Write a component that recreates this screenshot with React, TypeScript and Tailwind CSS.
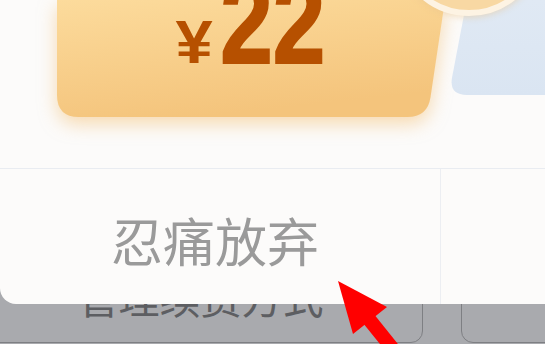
import React from "react";

const cjk = { fontFamily: '"Noto Sans CJK SC", "Noto Sans", sans-serif' };
const latin = { fontFamily: '"Liberation Sans", Arial, sans-serif' };

function GoldCoupon() {
  return (
    <div className="relative w-[389px] h-[117px] shrink-0">
      <svg
        width="389"
        height="117"
        viewBox="0 0 389 117"
        className="absolute inset-0 drop-shadow-[0_7px_9px_rgba(242,186,104,0.5)]"
      >
        <defs>
          <linearGradient id="gold" x1="0" y1="0" x2="0.35" y2="1">
            <stop offset="0" stopColor="#fcdb9c" />
            <stop offset="1" stopColor="#f4c47c" />
          </linearGradient>
        </defs>
        <path
          d="M0 0 H388 L373.5 97.2 Q370.5 117 350.5 117 H22 Q0 117 0 95 Z"
          fill="url(#gold)"
        />
      </svg>
      <div
        className="relative flex items-baseline justify-center -mt-[37px] pl-[12px] leading-none text-[#b65000] font-bold"
        style={latin}
      >
        <span className="text-[62px] inline-block scale-x-[1.08]">¥</span>
        <span className="text-[118px] inline-block -ml-[5px] scale-x-[0.8] [-webkit-text-stroke:2px_#b65000]">22</span>
      </div>
    </div>
  );
}

function BlueCoupon() {
  return (
    <div className="relative w-[105px] h-[95px] shrink-0 -ml-[6px]">
      <svg width="105" height="95" viewBox="0 0 105 95" className="absolute inset-0">
        <defs>
          <linearGradient id="blue" x1="0" y1="0" x2="0" y2="1">
            <stop offset="0" stopColor="#e0e9f4" />
            <stop offset="1" stopColor="#dae5f2" />
          </linearGradient>
        </defs>
        <path d="M26.8 0 H105 V95 H26.8 Q8.8 95 12.1 77.3 Z" fill="url(#blue)" />
      </svg>
    </div>
  );
}

export default function App() {
  return (
    <div className="relative w-[545px] h-[344px] overflow-hidden bg-[#a9aaae]" style={cjk}>
      {/* page behind the dialog */}
      <div className="flex pt-[250px]">
        <div className="-ml-[22px] w-[445px] h-[93px] shrink-0 flex items-center justify-center border border-[#7e7f83] rounded-[12px]">
          <span className="text-[41px] leading-none text-[#5d5e62]">管理续费方式</span>
        </div>
        <div className="ml-[38px] w-[120px] h-[93px] shrink-0 border border-[#7e7f83] rounded-[12px]" />
      </div>

      {/* dialog */}
      <div className="absolute left-0 top-0 w-[560px] h-[304px] bg-[#fcfbfa] rounded-bl-[16px] flex flex-col">
        <div className="relative h-[168px] flex items-start pl-[57px]">
          <GoldCoupon />
          <BlueCoupon />
          <div className="absolute left-[395px] -top-[132px] w-[148px] h-[148px] rounded-full bg-[#f8d8a3] border-[6px] border-[#fdf3e3] shadow-[0_2px_6px_rgba(232,196,140,0.45)]" />
        </div>
        <div className="flex h-[136px] border-t border-[#e9ecf1]">
          <button className="w-[441px] h-full flex items-center justify-center pr-[10px] pt-[7px] border-r border-[#eceef2]">
            <span className="text-[52px] leading-none text-[#9a9a9a]">忍痛放弃</span>
          </button>
          <div className="flex-1" />
        </div>
      </div>

      {/* red pointer */}
      <svg className="absolute left-0 top-0" width="545" height="344" viewBox="0 0 545 344">
        <line x1="368" y1="318" x2="405" y2="364" stroke="#ff0000" strokeWidth="14" />
        <polygon points="338,281 387,307 353,334" fill="#ff0000" />
      </svg>
    </div>
  );
}
